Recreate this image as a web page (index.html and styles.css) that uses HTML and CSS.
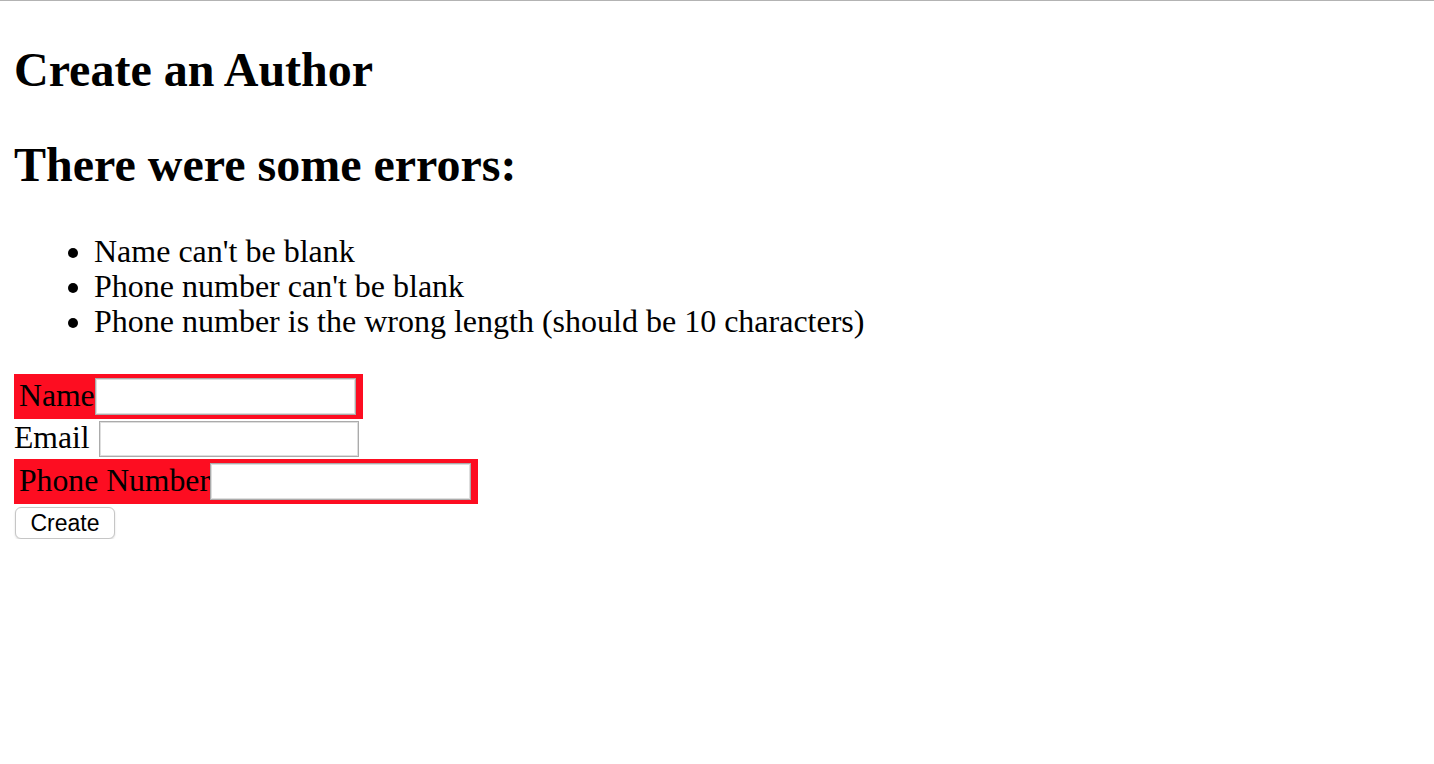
FILE: index.html
```html
<!DOCTYPE html>
<html>
<head>
<meta charset="utf-8">
<title>Create an Author</title>
<link rel="stylesheet" href="styles.css">
</head>
<body>
<h1 class="title">Create an Author</h1>
<h2 class="errors-title">There were some errors:</h2>
<ul class="error-list">
  <li>Name can't be blank</li>
  <li>Phone number can't be blank</li>
  <li>Phone number is the wrong length (should be 10 characters)</li>
</ul>
<form class="author-form">
  <div class="row row-error">
    <label class="label">Name</label>
    <input class="field" type="text">
  </div>
  <div class="row row-plain">
    <label class="label">Email</label>
    <input class="field" type="text">
  </div>
  <div class="row row-error">
    <label class="label">Phone Number</label>
    <input class="field" type="text">
  </div>
  <button class="submit" type="button">Create</button>
</form>
</body>
</html>
```

FILE: styles.css
```css
html, body {
  margin: 0;
  padding: 0;
  background: #ffffff;
}

body {
  border-top: 1px solid #b3b3b3;
  padding: 0 14px;
  font-family: "Liberation Serif", "Times New Roman", serif;
  color: #000;
}

.title,
.errors-title {
  font-size: 48px;
  line-height: 55px;
  font-weight: bold;
  margin: 0;
}

.title {
  margin-top: 41px;
  margin-bottom: 40px;
}

.errors-title {
  margin-bottom: 42px;
}

.error-list {
  margin: 0;
  padding-left: 80px;
  font-size: 32px;
  line-height: 35px;
  list-style: disc;
}

.author-form {
  margin-top: 35px;
  display: flex;
  flex-direction: column;
  align-items: flex-start;
}

.row {
  display: flex;
  align-items: flex-start;
}

.row-error {
  background: #fd0d21;
  padding: 4px 7px 4px 5px;
}

.row-plain {
  padding: 2px 0;
  gap: 9px;
}

.label {
  font-size: 31.7px;
  line-height: 35px;
  margin-top: 0;
}

.row-plain .label {
  line-height: 36px;
  margin-top: -1px;
}

.field {
  box-sizing: border-box;
  width: 261px;
  height: 37px;
  margin: 0;
  border: 1px solid #ababab;
  box-shadow: inset 0 0 0 1px #dedede;
  background: #fff;
  font-size: 20px;
  padding: 0 4px;
}

.row-plain .field {
  width: 260px;
  height: 36px;
}

.submit {
  margin: 3px 0 0 1px;
  width: 100px;
  height: 32px;
  box-sizing: border-box;
  background: #fff;
  border: 1px solid #c6c6c6;
  border-radius: 6px;
  box-shadow: 0 1px 2px rgba(0, 0, 0, 0.15);
  font-family: "Liberation Sans", Arial, sans-serif;
  font-size: 23px;
  color: #000;
  padding: 0;
}
```
